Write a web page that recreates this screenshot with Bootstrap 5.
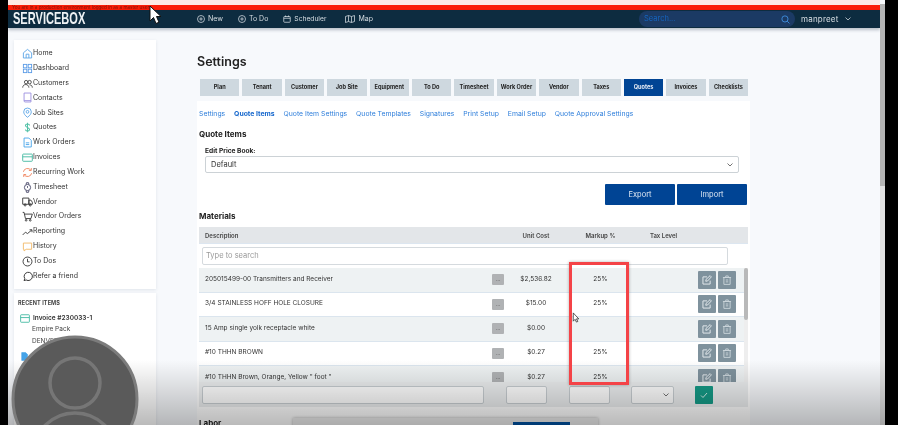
<!DOCTYPE html>
<html lang="en">
<head>
    <meta charset="UTF-8">
    <meta name="viewport" content="width=device-width, initial-scale=1.0">
    <title>Settings - ServiceBox</title>
    <link rel="stylesheet" href="https://cdn.jsdelivr.net/npm/bootstrap@5.3.0/dist/css/bootstrap.min.css">
    <style>
        html, body { height: 425px; overflow: hidden; background: #000; }
        body { font-family: Inter, "Open Sans", sans-serif; font-size: 7px; color: #222; }
        svg { display: block; flex: none; }

        .video-frame { position: relative; width: 877px; height: 425px; margin-left: 8px; overflow: hidden; background: #f7f9fc; filter: blur(.25px); }
        .shell { width: 872px; height: 425px; overflow: hidden; }
        .page-scroll { position: absolute; right: 0; top: 4px; bottom: 0; width: 5px; background: #e2e2e2; }
        .page-scroll i { display: block; height: 182px; background: #b5b5b5; }

        .top-pale { height: 5px; background: #fde9e5; }
        .top-red { height: 5px; background: #fb1c08; color: #7d1208; font-size: 4.6px; line-height: 5px; white-space: nowrap; }
        .top-nav { height: 18px; background: #0d2c40; color: #d7dee3; font-size: 7px; box-shadow: 0 2px 3px rgba(40,60,80,.3); }
        .brand-box { width: 189px; padding-left: 5px; }
        .brand-text { font-family: "Liberation Sans", sans-serif; font-weight: 700; font-size: 17px; line-height: 16px; color: #eef2f4; transform: scaleX(.65); transform-origin: left; white-space: nowrap; }
        .top-link { gap: 3px; }
        .gap-nav { margin-left: 15px; }
        .gap-map { margin-left: 19px; }
        .name-wide { font-size: 6.7px; }
        .search-pill { width: 156px; height: 16px; border-radius: 8px; background: #1b3a64; color: #1565c0; padding: 0 5px; font-size: 7.5px; }
        .user-name { width: 37px; margin-left: 6px; font-size: 8px; letter-spacing: .2px; }
        .user-caret { margin: 0 29px 0 7px; }

        .side-col { width: 142px; margin: 12px 0 0 6px; }
        .side-box { background: #fff; box-shadow: 0 1px 3px rgba(60,80,110,.12); }
        .side-main { height: 249px; padding: 6px 0 0 8px; }
        .side-item { height: 14.85px; gap: 0; font-size: 7px; color: #333; white-space: nowrap; }
        .side-recent { height: 133px; margin-top: 4px; padding: 6px 0 0 4px; }
        .recent-head { font-size: 5.5px; font-weight: 700; letter-spacing: .1px; color: #444; margin-bottom: 5px; }
        .recent-line { height: 12.5px; padding-left: 14px; font-size: 6.5px; color: #444; white-space: nowrap; }
        .recent-title { gap: 3px; padding-left: 2px; font-weight: 600; color: #333; }

        .content-col { width: 553px; margin-left: 41px; }
        .page-title { font-size: 12.5px; line-height: 16px; font-weight: 600; color: #222; margin: 0; padding-top: 26px; }
        .tab-row { gap: 3px; margin: 9px 0 0 3px; }
        .tab-btn { width: 39.4px; height: 17px; background: #ced8df; font-size: 5.6px; font-weight: 700; color: #222; }
        .tab-btn.is-on { background: #004494; color: #e8eef6; }
        .panel-white { background: #fff; margin-top: 5px; height: 325px; padding: 0 2px; }
        .sub-nav { gap: 8.9px; padding: 8px 0 0 0; font-size: 6.85px; line-height: 9px; color: #2f7fdb; white-space: nowrap; }
        .sub-nav .is-on { color: #1466cc; font-weight: 700; }
        .block-head { font-size: 8px; line-height: 10px; font-weight: 700; color: #222; }
        .head-quote { margin-top: 11px; }
        .head-mat { margin-top: 6px; }
        .field-label { font-size: 6.6px; line-height: 8px; font-weight: 700; margin: 8px 0 0 6px; }
        .price-select { width: 534px; height: 17px; margin: 1px 0 0 6px; border: 1px solid #ccd2d6; border-radius: 2px; padding: 0 5px; font-size: 7.5px; color: #333; }
        .action-row { gap: 2px; margin: 11px 1px 0 0; }
        .action-btn { width: 70px; height: 21px; background: #004494; border-radius: 1px; color: #dfe8f3; font-size: 7.5px; }

        .mat-head { height: 17px; background: #e3e6e9; margin-top: 6px; font-size: 6px; font-weight: 600; color: #444; border-bottom: 1px solid #dce6f0; }
        .cell-desc { width: 293px; padding-left: 6px; white-space: nowrap; overflow: hidden; }
        .cell-dots { width: 14px; }
        .cell-cost { width: 60px; text-align: center; }
        .cell-mark { width: 63px; margin-left: 3px; text-align: center; }
        .cell-tax { width: 63px; text-align: center; }
        .cell-acts { gap: 2px; padding-left: 3px; }
        .mat-search { width: 526px; height: 18px; margin: 3px 0 3px 3px; border: 1px solid #d5dade; border-radius: 2px; padding: 0 3px; font-size: 7.5px; color: #999; }
        .mat-rows { position: relative; height: 114px; overflow: hidden; }
        .mat-row { height: 24.5px; font-size: 6.5px; color: #333; border-bottom: 1px solid #dbe5ee; }
        .mat-row.is-tint { background: #eef2f3; }
        .dots-btn { width: 12px; height: 11px; background: #b0b2b4; color: #666; font-size: 6px; line-height: 9px; border-radius: 1px; text-align: center; }
        .ico-btn { width: 18px; height: 18px; background: #7f929d; border-radius: 1px; }
        .row-scroll { position: absolute; right: 0; top: 0; width: 4px; height: 114px; background: #eee; }
        .row-scroll i { display: block; height: 52px; background: #b9b9b9; border-radius: 2px; }
        .add-row { height: 25px; background: #eceeef; padding: 4px 0 0 3px; }
        .add-input { height: 18px; background: #fff; border: 1px solid #c8ced2; border-radius: 2px; }
        .add-desc { width: 282px; }
        .add-cost { width: 41px; margin-left: 22px; }
        .add-mark { width: 41px; margin-left: 22px; }
        .add-tax { width: 43px; margin-left: 21px; padding-right: 4px; }
        .add-ok { width: 18px; height: 18px; margin-left: 21px; background: #159a86; border-radius: 1px; }
        .labor-head { padding-top: 10px; font-size: 8px; font-weight: 700; }

        /* things lying over the recording */
        .fade-bottom { position: absolute; left: 0; right: 0; top: 360px; bottom: 0; background: linear-gradient(rgba(0,0,0,0), rgba(0,0,0,.27)); pointer-events: none; }
        .dialog-peek { position: absolute; left: 285px; top: 418px; width: 305px; height: 12px; background: #ececec; box-shadow: 0 0 3px rgba(0,0,0,.3); }
        .dialog-peek i { position: absolute; left: 220px; top: 4px; width: 57px; height: 10px; background: #00509f; }
        .red-box { position: absolute; left: 561px; top: 262px; width: 60px; height: 123px; border: 3px solid #f44347; box-shadow: 0 0 3px rgba(0,0,0,.3); }
        .cursor-big { position: absolute; left: 141px; top: 5px; }
        .cursor-small { position: absolute; left: 564px; top: 312px; }
        .avatar { position: absolute; left: 3px; top: 335px; }
    </style>
</head>
<body>
<div class="video-frame">
    <div class="shell">
        <div class="top-pale"></div>
        <div class="top-red ps-1">You are in a production environment logged in as a master user</div>
        <div class="top-nav d-flex align-items-center">
            <div class="brand-box"><div class="brand-text">SERVICEBOX</div></div>
            <div class="d-flex align-items-center top-link">
                <svg width="8" height="8" viewBox="0 0 16 16" fill="none" stroke="#d7dee3" stroke-width="1.5"><circle cx="8" cy="8" r="7"/><path d="M8 4.5v7M4.5 8h7"/></svg>New
            </div>
            <div class="d-flex align-items-center top-link gap-nav">
                <svg width="8" height="8" viewBox="0 0 16 16" fill="none" stroke="#d7dee3" stroke-width="1.5"><circle cx="8" cy="8" r="7"/><path d="M8 4.5v7M4.5 8h7"/></svg>To Do
            </div>
            <div class="d-flex align-items-center top-link gap-nav name-wide">
                <svg width="8" height="8" viewBox="0 0 16 16" fill="none" stroke="#d7dee3" stroke-width="1.5"><rect x="1.5" y="3" width="13" height="11.5" rx="1.5"/><path d="M1.5 6.5h13M5 1v3M11 1v3"/></svg>Scheduler
            </div>
            <div class="d-flex align-items-center top-link gap-map">
                <svg width="10" height="8" viewBox="0 0 20 16" fill="none" stroke="#d7dee3" stroke-width="1.5"><path d="M1 3l6-2 6 2 6-2v12l-6 2-6-2-6 2zM7 1v12M13 3v12"/></svg>Map
            </div>
            <div class="flex-grow-1"></div>
            <div class="search-pill d-flex align-items-center justify-content-between">
                <span>Search...</span>
                <svg width="9" height="9" viewBox="0 0 16 16" fill="none" stroke="#3f8fdf" stroke-width="1.6"><circle cx="7" cy="7" r="5.5"/><path d="M11 11l4 4"/></svg>
            </div>
            <div class="user-name">manpreet</div>
            <svg class="user-caret" width="6" height="4" viewBox="0 0 12 8" fill="none" stroke="#d7dee3" stroke-width="1.5"><path d="M1 1l5 5 5-5"/></svg>
        </div>

        <div class="d-flex">
            <div class="side-col">
                <div class="side-box side-main">
                    <div class="side-item d-flex align-items-center"><svg width="11" height="11" viewBox="0 0 16 16" fill="none" stroke="#5aa4e6" stroke-width="1.3"><path d="M2 7l6-5 6 5v7.5H2zM6 14.5V9h4v5.500"/></svg>Home</div>
                    <div class="side-item d-flex align-items-center"><svg width="11" height="11" viewBox="0 0 16 16" fill="none" stroke="#5a9be6" stroke-width="1.3"><rect x="2" y="2" width="5" height="5"/><rect x="9" y="2" width="5" height="5"/><rect x="2" y="9" width="5" height="5"/><rect x="9" y="9" width="5" height="5"/></svg>Dashboard</div>
                    <div class="side-item d-flex align-items-center"><svg width="11" height="11" viewBox="0 0 16 16" fill="none" stroke="#333" stroke-width="1.200"><circle cx="6" cy="6" r="2.500"/><circle cx="11" cy="6" r="2.500"/><path d="M1 14c0-6 9-6 9 0M11 10c3 0 4 2 4 4"/></svg>Customers</div>
                    <div class="side-item d-flex align-items-center"><svg width="11" height="11" viewBox="0 0 16 16" fill="none" stroke="#9b8fe0" stroke-width="1.300"><path d="M3 1.500h10v13H4.500A1.500 1.500 0 0 1 3 13zM3 12.500h10"/></svg>Contacts</div>
                    <div class="side-item d-flex align-items-center"><svg width="11" height="11" viewBox="0 0 16 16" fill="none" stroke="#5aa4e6" stroke-width="1.300"><path d="M8 15C4 12 2.500 9.500 2.500 7a5.500 5.500 0 0 1 11 0c0 2.500-1.500 5-5.500 8z"/><circle cx="8" cy="7" r="2"/></svg>Job Sites</div>
                    <div class="side-item d-flex align-items-center"><svg width="11" height="11" viewBox="0 0 16 16" fill="none" stroke="#55c2a8" stroke-width="1.500"><path d="M11 5c0-3-6-3-6 0s6 3 6 6-6 3-6 0M8 1v14"/></svg>Quotes</div>
                    <div class="side-item d-flex align-items-center"><svg width="11" height="11" viewBox="0 0 16 16" fill="none" stroke="#45a3e8" stroke-width="1.300"><path d="M3 1.500h7l3.500 3.500v9.500H3zM5.500 8.500h5M5.500 11h5"/></svg>Work Orders</div>
                    <div class="side-item d-flex align-items-center"><svg width="11" height="11" viewBox="0 0 16 16" fill="none" stroke="#3fb8a0" stroke-width="1.300"><rect x="1" y="3" width="14" height="10.500" rx="1"/><path d="M1 7h14"/></svg>Invoices</div>
                    <div class="side-item d-flex align-items-center"><svg width="11" height="11" viewBox="0 0 16 16" fill="none" stroke="#f0815a" stroke-width="1.300"><path d="M2 7a6 6 0 0 1 11-2M14 9a6 6 0 0 1-11 2M13.500 1.500V5H10M2.500 14.500V11H6"/></svg>Recurring Work</div>
                    <div class="side-item d-flex align-items-center"><svg width="11" height="11" viewBox="0 0 16 16" fill="none" stroke="#446" stroke-width="1.300"><circle cx="8" cy="8" r="4.500"/><path d="M6 3.500L6.500 1h3L10 3.500M6 12.500l.5 2.500h3l.5-2.500M8 6v2.500"/></svg>Timesheet</div>
                    <div class="side-item d-flex align-items-center"><svg width="11" height="11" viewBox="0 0 16 16" fill="none" stroke="#333" stroke-width="1.300"><path d="M1 3h9v9H1zM10 6h3l2 3v3h-5z"/><circle cx="4.500" cy="13" r="1.500"/><circle cx="12" cy="13" r="1.500"/></svg>Vendor</div>
                    <div class="side-item d-flex align-items-center"><svg width="11" height="11" viewBox="0 0 16 16" fill="none" stroke="#333" stroke-width="1.300"><path d="M1 2h2l2 9h8l2-6.500H4"/><circle cx="6" cy="13.500" r="1.200"/><circle cx="12" cy="13.500" r="1.200"/></svg>Vendor Orders</div>
                    <div class="side-item d-flex align-items-center"><svg width="11" height="11" viewBox="0 0 16 16" fill="none" stroke="#333" stroke-width="1.300"><path d="M1 13l4-4 3 2 6-5M11 5.500h3.500V9"/></svg>Reporting</div>
                    <div class="side-item d-flex align-items-center"><svg width="11" height="11" viewBox="0 0 16 16" fill="none" stroke="#f2b866" stroke-width="1.300"><path d="M2 3h12v9H6l-3 2.500V12H2z"/></svg>History</div>
                    <div class="side-item d-flex align-items-center"><svg width="11" height="11" viewBox="0 0 16 16" fill="none" stroke="#333" stroke-width="1.300"><circle cx="8" cy="8" r="6.500"/><path d="M8 4v4.500h3"/></svg>To Dos</div>
                    <div class="side-item d-flex align-items-center"><svg width="11" height="11" viewBox="0 0 16 16" fill="none" stroke="#333" stroke-width="1.400"><path d="M3 14l1-3a6 6 0 1 1 2 2z"/></svg>Refer a friend</div>
                </div>
                <div class="side-box side-recent">
                    <div class="recent-head">RECENT ITEMS</div>
                    <div class="recent-line recent-title d-flex align-items-center"><svg width="10" height="9" viewBox="0 0 16 14" fill="none" stroke="#3fb8a0" stroke-width="1.400"><rect x="1" y="1" width="14" height="12" rx="1"/><path d="M1 5.500h14"/></svg>Invoice #230033-1</div>
                    <div class="recent-line">Empire Pack</div>
                    <div class="recent-line">DENVER</div>
                    <div class="recent-line recent-title d-flex align-items-center"><svg width="9" height="9" viewBox="0 0 16 16" fill="#45a3e8" stroke="#45a3e8"><path d="M3 1h7l3.500 3.500V15H3z"/></svg>New Order</div>
                </div>
            </div>

            <div class="content-col">
                <h1 class="page-title">Settings</h1>
                <div class="tab-row d-flex">
                    <div class="tab-btn d-flex align-items-center justify-content-center">Plan</div>
                    <div class="tab-btn d-flex align-items-center justify-content-center">Tenant</div>
                    <div class="tab-btn d-flex align-items-center justify-content-center">Customer</div>
                    <div class="tab-btn d-flex align-items-center justify-content-center">Job Site</div>
                    <div class="tab-btn d-flex align-items-center justify-content-center">Equipment</div>
                    <div class="tab-btn d-flex align-items-center justify-content-center">To Do</div>
                    <div class="tab-btn d-flex align-items-center justify-content-center">Timesheet</div>
                    <div class="tab-btn d-flex align-items-center justify-content-center">Work Order</div>
                    <div class="tab-btn d-flex align-items-center justify-content-center">Vendor</div>
                    <div class="tab-btn d-flex align-items-center justify-content-center">Taxes</div>
                    <div class="tab-btn is-on d-flex align-items-center justify-content-center">Quotes</div>
                    <div class="tab-btn d-flex align-items-center justify-content-center">Invoices</div>
                    <div class="tab-btn d-flex align-items-center justify-content-center">Checklists</div>
                </div>
                <div class="panel-white">
                    <div class="sub-nav d-flex">
                        <span>Settings</span><span class="is-on">Quote Items</span><span>Quote Item Settings</span><span>Quote Templates</span><span>Signatures</span><span>Print Setup</span><span>Email Setup</span><span>Quote Approval Settings</span>
                    </div>
                    <div class="block-head head-quote">Quote Items</div>
                    <div class="field-label">Edit Price Book:</div>
                    <div class="price-select d-flex align-items-center justify-content-between">
                        <span>Default</span>
                        <svg width="6" height="4" viewBox="0 0 12 8" fill="none" stroke="#444" stroke-width="1.500"><path d="M1 1l5 5 5-5"/></svg>
                    </div>
                    <div class="action-row d-flex justify-content-end">
                        <div class="action-btn d-flex align-items-center justify-content-center">Export</div>
                        <div class="action-btn d-flex align-items-center justify-content-center">Import</div>
                    </div>
                    <div class="block-head head-mat">Materials</div>
                    <div class="mat-head d-flex align-items-center">
                        <div class="cell-desc">Description</div>
                        <div class="cell-dots"></div>
                        <div class="cell-cost">Unit Cost</div>
                        <div class="cell-mark">Markup %</div>
                        <div class="cell-tax">Tax Level</div>
                    </div>
                    <div class="mat-search d-flex align-items-center">Type to search</div>
                    <div class="mat-rows" id="matRows"></div>
                    <div class="add-row d-flex">
                        <div class="add-input add-desc"></div>
                        <div class="add-input add-cost"></div>
                        <div class="add-input add-mark"></div>
                        <div class="add-input add-tax d-flex align-items-center justify-content-end">
                            <svg width="6" height="4" viewBox="0 0 12 8" fill="none" stroke="#444" stroke-width="1.500"><path d="M1 1l5 5 5-5"/></svg>
                        </div>
                        <div class="add-ok d-flex align-items-center justify-content-center">
                            <svg width="8" height="7" viewBox="0 0 16 14" fill="none" stroke="#cdeee8" stroke-width="2"><path d="M2 7l4 4 8-9"/></svg>
                        </div>
                    </div>
                    <div class="labor-head">Labor</div>
                </div>
            </div>
        </div>
    </div>

    <div class="page-scroll"><i></i></div>
    <div class="dialog-peek"><i></i></div>
    <div class="fade-bottom"></div>
    <div class="red-box"></div>
    <svg class="cursor-small" width="8" height="11" viewBox="0 0 8 12" fill="#fff" stroke="#222" stroke-width=".8"><path d="M1 1v9l2-2 1.500 3 1.500-.7L4.500 7.500H7z"/></svg>
    <svg class="cursor-big" width="13" height="20" viewBox="0 0 13 20" fill="#fff" stroke="#111" stroke-width="1"><path d="M1 1v15l3.500-3.500 2.500 6 3-1.300-2.500-5.700H12z"/></svg>
    <svg class="avatar" width="128" height="90" viewBox="0 0 128 90">
        <circle cx="64" cy="64" r="62" fill="#5a5a5a" stroke="#7c7c7c" stroke-width="3"/>
        <circle cx="64" cy="48" r="25" fill="none" stroke="#767676" stroke-width="3.500"/>
        <circle cx="64" cy="120" r="42" fill="none" stroke="#767676" stroke-width="3.500"/>
    </svg>
</div>

<script>
    (() => {
        const items = [
            { name: '205015499-00 Transmitters and Receiver', cost: '$2,536.82', markup: '25%' },
            { name: '3/4 STAINLESS HOFF HOLE CLOSURE', cost: '$15.00', markup: '25%' },
            { name: '15 Amp single yolk receptacle white', cost: '$0.00', markup: '' },
            { name: '#10 THHN BROWN', cost: '$0.27', markup: '25%' },
            { name: '#10 THHN Brown, Orange, Yellow " foot "', cost: '$0.27', markup: '25%' }
        ];

        const editIcon = '<svg width="10" height="10" viewBox="0 0 16 16" fill="none" stroke="#e6ecef" stroke-width="1.500"><path d="M13 9v5.500H1.500V3H8M6 10l.5-3L13 1l2 2-6 6.500z"/></svg>';
        const trashIcon = '<svg width="10" height="10" viewBox="0 0 16 16" fill="none" stroke="#c9d3d9" stroke-width="1.500"><path d="M3 4h10v11H3zM1.500 4h13M6 4V1.500h4V4M6 8h4M6 11h4"/></svg>';

        document.getElementById('matRows').innerHTML = items.map((item, i) => `
            <div class="mat-row d-flex align-items-center ${i % 2 === 0 ? 'is-tint' : ''}">
                <div class="cell-desc">${item.name.replace(/</g, '&lt;')}</div>
                <div class="cell-dots"><div class="dots-btn">...</div></div>
                <div class="cell-cost">${item.cost}</div>
                <div class="cell-mark">${item.markup}</div>
                <div class="cell-tax"></div>
                <div class="cell-acts d-flex">
                    <div class="ico-btn d-flex align-items-center justify-content-center">${editIcon}</div>
                    <div class="ico-btn d-flex align-items-center justify-content-center">${trashIcon}</div>
                </div>
            </div>`).join('') + '<div class="row-scroll"><i></i></div>';
    })();
</script>
<script src="https://cdn.jsdelivr.net/npm/bootstrap@5.3.0/dist/js/bootstrap.bundle.min.js"></script>
</body>
</html>
